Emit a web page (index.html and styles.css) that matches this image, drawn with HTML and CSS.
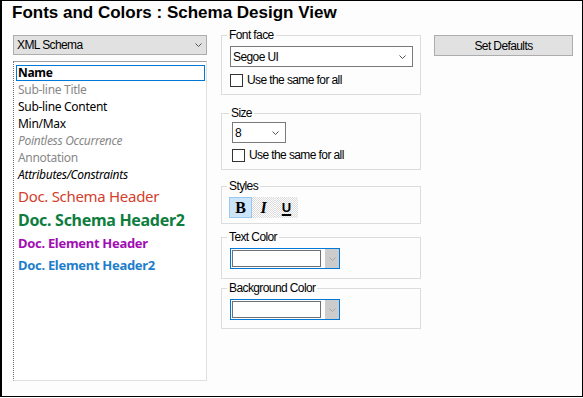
FILE: index.html
```html
<!DOCTYPE html>
<html>
<head>
<meta charset="utf-8">
<title>Fonts and Colors</title>
<link rel="stylesheet" href="styles.css">
</head>
<body>
<div class="dialog">
  <h1 class="title">Fonts and Colors : Schema Design View</h1>
  <div class="main">
    <div class="left">
      <div class="combo">
        <span>XML Schema</span>
        <svg class="chev" width="7" height="4" viewBox="0 0 7 4"><path d="M0.5 0.5 L3.5 3.5 L6.5 0.5" fill="none" stroke="#555" stroke-width="1"/></svg>
      </div>
      <ul class="list">
        <li class="item focus">Name</li>
        <li class="item gray">Sub-line Title</li>
        <li class="item">Sub-line Content</li>
        <li class="item">Min/Max</li>
        <li class="item gray ital">Pointless Occurrence</li>
        <li class="item gray">Annotation</li>
        <li class="item ital">Attributes/Constraints</li>
        <li class="item doc-schema">Doc. Schema Header</li>
        <li class="item doc-schema2">Doc. Schema Header2</li>
        <li class="item doc-elem">Doc. Element Header</li>
        <li class="item doc-elem2">Doc. Element Header2</li>
      </ul>
    </div>
    <div class="groups">
      <fieldset class="group g-face">
        <legend>Font face</legend>
        <div class="select face">
          <span>Segoe UI</span>
          <svg class="chev" width="7" height="4" viewBox="0 0 7 4"><path d="M0.5 0.5 L3.5 3.5 L6.5 0.5" fill="none" stroke="#555" stroke-width="1"/></svg>
        </div>
        <label class="check"><span class="cb"></span><span>Use the same for all</span></label>
      </fieldset>
      <fieldset class="group g-size">
        <legend>Size</legend>
        <div class="select size">
          <span>8</span>
          <svg class="chev" width="7" height="4" viewBox="0 0 7 4"><path d="M0.5 0.5 L3.5 3.5 L6.5 0.5" fill="none" stroke="#555" stroke-width="1"/></svg>
        </div>
        <label class="check"><span class="cb"></span><span>Use the same for all</span></label>
      </fieldset>
      <fieldset class="group g-styles">
        <legend>Styles</legend>
        <div class="sbtns">
          <span class="sbtn on b">B</span>
          <span class="sbtn i">I</span>
          <span class="sbtn u">U</span>
        </div>
      </fieldset>
      <fieldset class="group g-text">
        <legend>Text Color</legend>
        <div class="ccombo">
          <span class="cbox"></span>
          <span class="cbtn"><svg width="7" height="4" viewBox="0 0 7 4"><path d="M0.5 0.5 L3.5 3.5 L6.5 0.5" fill="none" stroke="#a8a8a8" stroke-width="1"/></svg></span>
        </div>
      </fieldset>
      <fieldset class="group g-back">
        <legend>Background Color</legend>
        <div class="ccombo">
          <span class="cbox"></span>
          <span class="cbtn"><svg width="7" height="4" viewBox="0 0 7 4"><path d="M0.5 0.5 L3.5 3.5 L6.5 0.5" fill="none" stroke="#a8a8a8" stroke-width="1"/></svg></span>
        </div>
      </fieldset>
    </div>
    <div class="side">
      <button class="btn" type="button">Set Defaults</button>
    </div>
  </div>
</div>
</body>
</html>
```

FILE: styles.css
```css
* { box-sizing: border-box; }
body { margin: 0; background: #fff; }

.dialog {
  width: 583px;
  height: 397px;
  border: 1px solid #000;
  border-left-width: 2px;
  background: #fdfdfd;
  padding: 2px 0 0 11px;
  font-family: "Liberation Sans", Arial, sans-serif;
  font-size: 12px;
  letter-spacing: -0.6px;
  color: #000;
}

.title {
  margin: 0 0 5px -1px;
  font-size: 17px;
  font-weight: bold;
  line-height: 20px;
  letter-spacing: 0;
}

.main { display: flex; align-items: flex-start; }

.left { width: 194px; padding-top: 7px; }
.groups { width: 200px; margin-left: 14px; }
.side { margin-left: 13px; padding-top: 7px; }

.combo {
  height: 20px;
  border: 1px solid #adadad;
  background: #e1e1e1;
  display: flex;
  align-items: center;
  justify-content: space-between;
  padding: 0 4px 0 3px;
}

.chev { display: block; }

.list {
  margin: 6px 0 0;
  height: 320px;
  border: 1px solid #e0e0e0;
  border-top-color: #a0a0a0;
  border-left: 1px dotted #6a6a7a;
  background: #fff;
  padding: 3px 1px 0 2px;
  list-style: none;
  font-family: "Noto Sans", "Open Sans", sans-serif;
  font-size: 12px;
  letter-spacing: -0.3px;
}

.item { height: 17px; line-height: 17px; padding-left: 2px; white-space: nowrap; }
.item.focus {
  height: 16px;
  line-height: 14px;
  border: 1px solid #0078d7;
  padding-left: 1px;
  font-weight: bold;
}
.gray { color: #888; }
.ital { font-style: italic; }
.doc-schema { height: 26px; line-height: 26px; font-size: 15px; color: #d2402c; }
.doc-schema2 { height: 22px; line-height: 22px; font-size: 16px; font-weight: bold; color: #0e7d3e; }
.doc-elem { height: 24px; line-height: 24px; font-size: 13px; font-weight: bold; color: #a10db3; }
.doc-elem2 { height: 20px; line-height: 20px; font-size: 13px; font-weight: bold; color: #1c7ecb; }

.group {
  margin: 0;
  padding: 0 8px;
  border: 1px solid #dcdcdc;
  min-width: 0;
}
.group legend {
  padding: 0 2px;
  margin-left: -3px;
  height: 14px;
  line-height: 14px;
}

.select {
  height: 21px;
  border: 1px solid #7a7a7a;
  background: #fff;
  display: flex;
  align-items: center;
  justify-content: space-between;
  padding: 0 6px 0 2px;
}
.select.face { width: 183px; margin-top: 4px; }
.select.size { width: 54px; margin-top: 2px; }

.check { display: flex; align-items: center; gap: 4px; height: 13px; line-height: 13px; }
.cb { width: 13px; height: 13px; border: 1px solid #333; background: #fff; flex: none; }

.g-face .check { margin-top: 7px; }
.g-face { padding-bottom: 7px; }

.g-size { margin-top: 11px; padding: 0 8px 7px 10px; }
.g-size .check { margin-top: 6px; }

.g-styles { margin-top: 9px; padding-bottom: 5px; }
.sbtns { display: flex; margin-top: 4px; margin-left: -1px; }
.sbtn {
  width: 23px;
  height: 21px;
  display: flex;
  align-items: center;
  justify-content: center;
  background: repeating-conic-gradient(#dadada 0% 25%, #fff 0% 50%) 0 0 / 2px 2px;
  letter-spacing: 0;
  font-weight: bold;
}
.sbtn.on { background: #cce4f7; border: 1px solid #99c9ef; }
.sbtn.b { font-family: "Liberation Serif", serif; font-size: 16px; }
.sbtn.i { font-family: "Liberation Serif", serif; font-size: 16px; font-style: italic; }
.sbtn.u { font-family: "Liberation Sans", sans-serif; font-size: 13px; text-decoration: underline; text-decoration-thickness: 2px; text-underline-offset: 2px; }

.g-text { margin-top: 6px; padding-bottom: 9px; }
.g-back { margin-top: 2px; padding-bottom: 8px; }
.ccombo {
  margin-top: 4px;
  width: 110px;
  height: 21px;
  border: 1px solid #0078d7;
  display: flex;
  padding-left: 1px;
}
.cbox { width: 89px; margin: 1px 0; border: 1px solid #707070; background: #fff; }
.cbtn {
  margin-left: 4px;
  width: 14px;
  background: #cccccc;
  display: flex;
  align-items: center;
  justify-content: center;
}

.btn {
  width: 139px;
  height: 21px;
  border: 1px solid #adadad;
  background: #e1e1e1;
  font: inherit;
  letter-spacing: inherit;
  color: #000;
  padding: 0;
}
```
